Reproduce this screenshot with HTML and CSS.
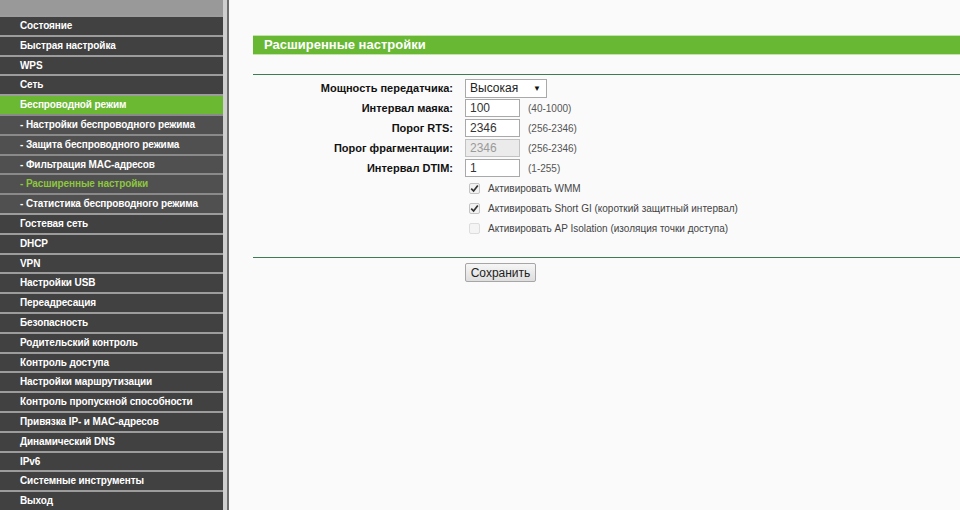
FILE: index.html
```html
<!DOCTYPE html>
<html lang="ru">

<head>
  <meta charset="UTF-8">
  <title>Расширенные настройки</title>
  <link rel="stylesheet" href="styles.css">
</head>

<body>
  <div class="menu">
    <div class="menu-top"></div>
    <ul class="menu-list">
      <li>Состояние</li>
      <li>Быстрая настройка</li>
      <li>WPS</li>
      <li>Сеть</li>
      <li class="open">Беспроводной режим</li>
      <li class="sub">- Настройки беспроводного режима</li>
      <li class="sub">- Защита беспроводного режима</li>
      <li class="sub">- Фильтрация MAC-адресов</li>
      <li class="sub current">- Расширенные настройки</li>
      <li class="sub">- Статистика беспроводного режима</li>
      <li>Гостевая сеть</li>
      <li>DHCP</li>
      <li>VPN</li>
      <li>Настройки USB</li>
      <li>Переадресация</li>
      <li>Безопасность</li>
      <li>Родительский контроль</li>
      <li>Контроль доступа</li>
      <li>Настройки маршрутизации</li>
      <li>Контроль пропускной способности</li>
      <li>Привязка IP- и MAC-адресов</li>
      <li>Динамический DNS</li>
      <li>IPv6</li>
      <li>Системные инструменты</li>
      <li>Выход</li>
    </ul>
  </div>

  <div class="main">
    <h2 class="title">Расширенные настройки</h2>

    <form class="settings">
      <div class="row">
        <label class="label">Мощность передатчика:</label>
        <div class="select-wrap">
          <select class="select">
            <option>Высокая</option>
            <option>Средняя</option>
            <option>Низкая</option>
          </select>
          <span class="arrow">▼</span>
        </div>
      </div>
      <div class="row">
        <label class="label">Интервал маяка:</label>
        <input class="field" type="text" value="100">
        <span class="hint">(40-1000)</span>
      </div>
      <div class="row">
        <label class="label">Порог RTS:</label>
        <input class="field" type="text" value="2346">
        <span class="hint">(256-2346)</span>
      </div>
      <div class="row">
        <label class="label">Порог фрагментации:</label>
        <input class="field" type="text" value="2346" disabled>
        <span class="hint">(256-2346)</span>
      </div>
      <div class="row">
        <label class="label">Интервал DTIM:</label>
        <input class="field" type="text" value="1">
        <span class="hint">(1-255)</span>
      </div>

      <label class="row check">
        <span class="box on"><svg width="9" height="9" viewBox="0 0 9 9"><path d="M1.2 4.6 L3.6 7 L7.8 1.6" fill="none" stroke="#333" stroke-width="1.7"/></svg></span>
        Активировать WMM
      </label>
      <label class="row check">
        <span class="box on"><svg width="9" height="9" viewBox="0 0 9 9"><path d="M1.2 4.6 L3.6 7 L7.8 1.6" fill="none" stroke="#333" stroke-width="1.7"/></svg></span>
        Активировать Short GI (короткий защитный интервал)
      </label>
      <label class="row check">
        <span class="box off"></span>
        Активировать AP Isolation (изоляция точки доступа)
      </label>

      <div class="actions">
        <button type="button" class="save">Сохранить</button>
      </div>
    </form>
  </div>
</body>

</html>
```

FILE: styles.css
```css
body {
  margin: 0;
  display: flex;
  height: 510px;
  overflow: hidden;
  background-color: #fafafa;
  font-family: "Liberation Sans", Arial, sans-serif;
  font-size: 11px;
}

.menu {
  width: 223px;
  flex-shrink: 0;
  background-color: #444444;
  border-right: 4px solid #cfcfcf;
  box-shadow: 2px 0 0 #6d6d6d;
}

.menu-top {
  height: 15px;
  background-color: #999999;
}

.menu-list {
  list-style: none;
  margin: 0;
  padding: 0;
}

.menu-list li {
  height: 17.8px;
  line-height: 17.8px;
  border-top: 2px solid #9c9c9c;
  padding-left: 20px;
  color: #ffffff;
  font-size: 10px;
  font-weight: bold;
  letter-spacing: -0.1px;
  background-color: #414141;
  white-space: nowrap;
}

.menu-list li.open {
  background-color: #6bb833;
}

.menu-list li.sub {
  background-color: #505050;
  border-top-color: #8a8a8a;
}

.menu-list li.current {
  color: #8dc63f;
}

.main {
  flex: 1;
  padding: 35px 0 0 26px;
}

.title {
  margin: 0;
  height: 18px;
  line-height: 18px;
  padding-left: 11px;
  background-color: #68b834;
  border-top: 1px solid #c2e4a8;
  border-bottom: 1px solid #c2e4a8;
  color: #ffffff;
  font-size: 13px;
  font-weight: bold;
}

.settings {
  margin-top: 19px;
  border-top: 1px solid #3f7a52;
  padding-top: 3px;
}

.row {
  display: flex;
  align-items: center;
  height: 20px;
}

.label {
  width: 200px;
  margin-right: 12px;
  text-align: right;
  font-weight: bold;
  color: #111111;
}

.field {
  box-sizing: border-box;
  width: 55px;
  height: 18px;
  margin: 0;
  padding: 0 4px;
  border: 1px solid #a9a9a9;
  background: #ffffff;
  font-family: inherit;
  font-size: 12px;
  color: #333333;
}

.field:disabled {
  background: #ebebeb;
  color: #9a9a9a;
  border-color: #c2c2c2;
}

.hint {
  margin-left: 8px;
  font-size: 10px;
  color: #555555;
}

.select-wrap {
  position: relative;
  width: 82px;
  height: 19px;
}

.select {
  appearance: none;
  box-sizing: border-box;
  width: 100%;
  height: 100%;
  margin: 0;
  padding: 0 4px;
  border: 1px solid #a9a9a9;
  border-radius: 0;
  background: #ffffff;
  font-family: inherit;
  font-size: 12px;
  color: #222222;
}

.arrow {
  position: absolute;
  right: 6px;
  top: 5px;
  font-size: 8px;
  color: #111111;
  pointer-events: none;
}

.check {
  padding-left: 216px;
  font-size: 10px;
  color: #444444;
}

.box {
  box-sizing: border-box;
  width: 11px;
  height: 11px;
  margin-right: 8px;
  border: 1px solid #c4c4c4;
  border-radius: 2px;
  background: #f2f2f2;
  display: flex;
  align-items: center;
  justify-content: center;
}

.box.off {
  border-color: #dddddd;
  background: #f4f4f4;
}

.actions {
  margin-top: 19px;
  border-top: 1px solid #3f7a52;
  padding: 5px 0 0 212px;
}

.save {
  box-sizing: border-box;
  width: 71px;
  height: 19px;
  padding: 0;
  border: 1px solid #a6a6a6;
  border-radius: 2px;
  background: linear-gradient(#f6f6f6, #dedede);
  font-family: inherit;
  font-size: 12px;
  color: #222222;
}
```
